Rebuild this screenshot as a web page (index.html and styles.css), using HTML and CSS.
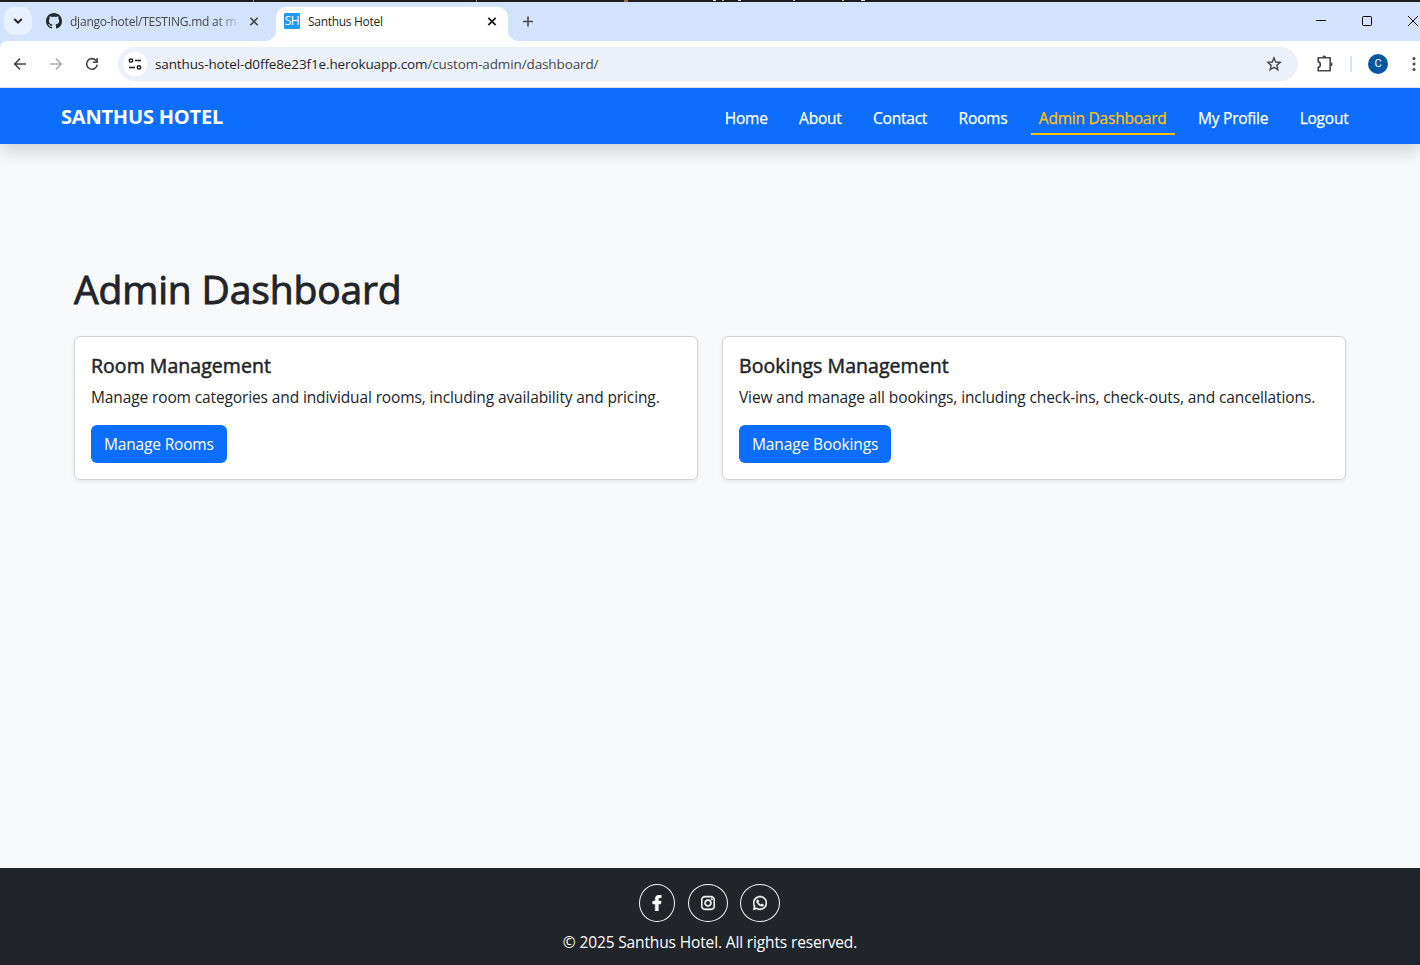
FILE: index.html
```html
<!DOCTYPE html>
<html lang="en">
<head>
<meta charset="utf-8">
<title>Santhus Hotel</title>
<link rel="stylesheet" href="styles.css">
</head>
<body>
<div class="window">
  <div class="window-edge"></div>
  <div class="tabstrip">
    <div class="tab-search"><svg width="28" height="28" viewBox="0 0 28 28"><path d="M10.3 12l3.7 3.7 3.7-3.7" fill="none" stroke="#1f1f1f" stroke-width="1.8"/></svg></div>
    <div class="tab tab-inactive">
      <svg class="tab-icon" width="16" height="16" viewBox="0 0 16 16"><path fill="#24292f" d="M8 0C3.58 0 0 3.58 0 8c0 3.54 2.29 6.53 5.47 7.59.4.07.55-.17.55-.38 0-.19-.01-.82-.01-1.49-2.01.37-2.53-.49-2.69-.94-.09-.23-.48-.94-.82-1.13-.28-.15-.68-.52-.01-.53.63-.01 1.08.58 1.23.82.72 1.21 1.87.87 2.33.66.07-.52.28-.87.51-1.07-1.78-.2-3.64-.89-3.64-3.95 0-.87.31-1.59.82-2.15-.08-.2-.36-1.02.08-2.12 0 0 .67-.21 2.2.82.64-.18 1.32-.27 2-.27s1.36.09 2 .27c1.53-1.04 2.2-.82 2.2-.82.44 1.1.16 1.92.08 2.12.51.56.82 1.27.82 2.15 0 3.07-1.87 3.75-3.65 3.95.29.25.54.73.54 1.48 0 1.07-.01 1.93-.01 2.2 0 .21.15.46.55.38A8.01 8.01 0 0 0 16 8c0-4.42-3.58-8-8-8z"/></svg>
      <span class="tab-title tab-title-fade">django-hotel/TESTING.md at m</span>
      <svg class="tab-close" width="16" height="16" viewBox="0 0 16 16"><path d="M4.3 3.8l7.4 7.4M11.7 3.8l-7.4 7.4" stroke="#474747" stroke-width="1.6"/></svg>
    </div>
    <div class="tab tab-active">
      <span class="favicon">SH</span>
      <span class="tab-title">Santhus Hotel</span>
      <svg class="tab-close" width="16" height="16" viewBox="0 0 16 16"><path d="M4.3 3.8l7.4 7.4M11.7 3.8l-7.4 7.4" stroke="#1f1f1f" stroke-width="1.8"/></svg>
    </div>
    <svg class="new-tab" width="16" height="16" viewBox="0 0 16 16"><path d="M8 2.5v10M3 7.5h10" stroke="#474747" stroke-width="1.6"/></svg>
    <div class="window-controls">
      <svg width="12" height="12" viewBox="0 0 12 12"><path d="M1 5.5h10" stroke="#000"/></svg>
      <svg width="12" height="12" viewBox="0 0 12 12"><rect x="1.5" y="1.5" width="9" height="9" rx="1" fill="none" stroke="#000"/></svg>
      <svg width="12" height="12" viewBox="0 0 12 12"><path d="M1 1l10 10M11 1L1 11" stroke="#000"/></svg>
    </div>
  </div>
  <div class="toolbar-frame">
  <div class="toolbar">
    <svg class="nav-icon" width="16" height="16" viewBox="0 0 16 16"><path d="M14 8H3M8 2.6L2.6 8 8 13.4" fill="none" stroke="#474747" stroke-width="1.5"/></svg>
    <svg class="nav-icon" width="16" height="16" viewBox="0 0 16 16"><path d="M2 8h11M8 2.6L13.4 8 8 13.4" fill="none" stroke="#ababab" stroke-width="1.5"/></svg>
    <svg class="nav-icon" width="16" height="16" viewBox="0 0 16 16"><path d="M13.2 8.6a5.3 5.3 0 1 1-1.3-4.2l1.2 1.2" fill="none" stroke="#474747" stroke-width="1.6"/><path d="M13.9 2v5H8.9V5.5h3.4V2z" fill="#474747"/></svg>
    <div class="omnibox">
      <div class="site-info"><svg width="16" height="16" viewBox="0 0 16 16"><g fill="none" stroke="#1f1f1f" stroke-width="1.5"><circle cx="4" cy="4.6" r="1.7"/><path d="M8 4.6h6M2 11.4h6"/><circle cx="12" cy="11.4" r="1.7"/></g></svg></div>
      <span class="url"><span class="url-host">santhus-hotel-d0ffe8e23f1e.herokuapp.com</span><span class="url-path">/custom-admin/dashboard/</span></span>
      <svg class="star" width="16" height="16" viewBox="0 0 16 16"><path d="M8 1.9l1.75 4.1 4.45.4-3.4 2.95 1.05 4.35L8 11.4l-3.85 2.3L5.2 9.35 1.8 6.4l4.45-.4z" fill="none" stroke="#474747" stroke-width="1.4"/></svg>
    </div>
    <svg class="extensions" width="18" height="18" viewBox="0 0 18 18"><path d="M2.2 2.8h12v12.9h-12v-3.4c2.8-.3 2.8-5 0-5.4z" fill="none" stroke="#474747" stroke-width="1.6" stroke-linejoin="round"/><path d="M6.3 2.6a2 2 0 0 1 4 0zM14.6 7.2a2 2 0 0 1 0 4z" fill="#474747"/></svg>
    <span class="toolbar-divider"></span>
    <span class="profile">C</span>
    <svg class="menu-dots" width="6" height="16" viewBox="0 0 6 16"><g fill="#474747"><circle cx="3" cy="2.5" r="1.5"/><circle cx="3" cy="8" r="1.5"/><circle cx="3" cy="13.5" r="1.5"/></g></svg>
  </div>
  </div>

  <header class="navbar">
    <a class="brand">SANTHUS HOTEL</a>
    <nav class="links">
      <a class="link">Home</a>
      <a class="link">About</a>
      <a class="link">Contact</a>
      <a class="link">Rooms</a>
      <a class="link active">Admin Dashboard</a>
      <a class="link">My Profile</a>
      <a class="link">Logout</a>
    </nav>
  </header>

  <main class="content">
    <h1 class="title">Admin Dashboard</h1>
    <div class="cards">
      <section class="card">
        <h2 class="card-title">Room Management</h2>
        <p class="card-text">Manage room categories and individual rooms, including availability and pricing.</p>
        <a class="btn btn-rooms">Manage Rooms</a>
      </section>
      <section class="card">
        <h2 class="card-title">Bookings Management</h2>
        <p class="card-text">View and manage all bookings, including check-ins, check-outs, and cancellations.</p>
        <a class="btn">Manage Bookings</a>
      </section>
    </div>
  </main>

  <footer class="footer">
    <div class="social">
      <a class="social-link social-facebook"><svg width="10" height="16" viewBox="0 0 320 512"><path d="M279.14 288l14.22-92.66h-88.91v-60.13c0-25.35 12.42-50.06 52.24-50.06h40.42V6.26S260.43 0 225.36 0c-73.22 0-121.08 44.38-121.08 124.72v70.62H22.89V288h81.39v224h100.17V288z"/></svg></a>
      <a class="social-link"><svg width="14" height="16" viewBox="0 0 448 512"><path d="M224.1 141c-63.6 0-114.9 51.3-114.9 114.9s51.3 114.9 114.9 114.9S339 319.5 339 255.9 287.7 141 224.1 141zm0 189.6c-41.1 0-74.7-33.5-74.7-74.7s33.5-74.7 74.7-74.7 74.7 33.5 74.7 74.7-33.6 74.7-74.7 74.7zm146.4-194.3c0 14.9-12 26.8-26.8 26.8-14.9 0-26.8-12-26.8-26.8s12-26.8 26.8-26.8 26.8 12 26.8 26.8zm76.1 27.2c-1.7-35.9-9.9-67.7-36.2-93.9-26.2-26.2-58-34.4-93.9-36.2-37-2.1-147.9-2.1-184.9 0-35.8 1.7-67.6 9.9-93.9 36.1s-34.4 58-36.2 93.9c-2.1 37-2.1 147.9 0 184.9 1.7 35.9 9.9 67.7 36.2 93.9s58 34.4 93.9 36.2c37 2.1 147.9 2.1 184.9 0 35.9-1.7 67.7-9.9 93.9-36.2 26.2-26.2 34.4-58 36.2-93.9 2.1-37 2.1-147.8 0-184.8zM398.8 388c-7.8 19.6-22.9 34.7-42.6 42.6-29.5 11.7-99.5 9-132.1 9s-102.7 2.6-132.1-9c-19.6-7.8-34.7-22.9-42.6-42.6-11.7-29.5-9-99.5-9-132.1s-2.6-102.7 9-132.1c7.8-19.6 22.9-34.7 42.6-42.6 29.5-11.7 99.5-9 132.1-9s102.7-2.6 132.1 9c19.6 7.8 34.7 22.9 42.6 42.6 11.7 29.5 9 99.5 9 132.1s2.7 102.7-9 132.1z"/></svg></a>
      <a class="social-link"><svg width="14" height="16" viewBox="0 0 448 512"><path d="M380.9 97.1C339 55.1 283.2 32 223.9 32c-122.4 0-222 99.6-222 222 0 39.1 10.2 77.3 29.6 111L0 480l117.7-30.9c32.4 17.7 68.9 27 106.1 27h.1c122.3 0 224.1-99.6 224.1-222 0-59.3-25.2-115-67.1-157zm-157 341.6c-33.2 0-65.7-8.9-94-25.7l-6.7-4-69.8 18.3L72 359.2l-4.4-7c-18.5-29.4-28.2-63.3-28.2-98.2 0-101.7 82.8-184.5 184.6-184.5 49.3 0 95.6 19.2 130.4 54.1 34.8 34.9 56.2 81.2 56.1 130.5 0 101.8-84.9 184.6-186.6 184.6zm101.2-138.2c-5.5-2.8-32.8-16.2-37.9-18-5.1-1.9-8.8-2.8-12.5 2.8-3.7 5.6-14.3 18-17.6 21.8-3.2 3.7-6.5 4.2-12 1.4-32.6-16.3-54-29.1-75.5-66-5.7-9.8 5.7-9.1 16.3-30.3 1.8-3.7.9-6.9-.5-9.7-1.4-2.8-12.5-30.1-17.1-41.2-4.5-10.8-9.1-9.3-12.5-9.5-3.2-.2-6.9-.2-10.6-.2-3.7 0-9.7 1.4-14.8 6.9-5.1 5.6-19.4 19-19.4 46.3 0 27.3 19.9 53.7 22.6 57.4 2.8 3.7 39.1 59.7 94.8 83.8 35.2 15.2 49 16.5 66.6 13.9 10.7-1.6 32.8-13.4 37.4-26.4 4.6-13 4.6-24.1 3.2-26.4-1.3-2.5-5-3.9-10.5-6.6z"/></svg></a>
    </div>
    <p class="copyright">© 2025 Santhus Hotel. All rights reserved.</p>
  </footer>
</div>
</body>
</html>
```
FILE: styles.css
```css
* { box-sizing: border-box; }
body { margin: 0; font-family: "Open Sans", "Noto Sans", sans-serif; color: #212529; background: #1d1b1c; }
svg { display: block; flex: none; }
.window { width: 1420px; height: 965px; display: flex; flex-direction: column; overflow: hidden; background: #f8f9fb; }
/* sliver of the window behind, with the feet of its text line */
.window-edge {
  height: 2px; flex: none; background-color: #1d1b1c; background-repeat: no-repeat;
  background-image: linear-gradient(#8a7448, #8a7448), linear-gradient(#ddd, #ddd), linear-gradient(#aaa, #aaa), linear-gradient(#ddd, #ddd), linear-gradient(#bbb, #bbb), linear-gradient(#bbb, #bbb), linear-gradient(#ddd, #ddd), linear-gradient(#888, #888), linear-gradient(#888, #888);
  background-size: 4px 2px, 3px 1px, 2px 1px, 3px 1px, 2px 1px, 2px 1px, 4px 1px, 1px 2px, 1px 2px;
  background-position: 624px 0, 713px 0, 722px 0, 738px 0, 793px 0, 842px 0, 861px 0, 253px 0, 476px 0;
}

.tabstrip { height: 39px; flex: none; display: flex; align-items: center; background: #d3e3fd; padding-left: 4px; }
.tab-search { width: 28px; height: 28px; margin-bottom: 1px; border-radius: 10px; background: #e9f1fe; }
.tab { display: flex; align-items: center; height: 33px; }
.tab-inactive { width: 244px; padding-left: 14px; }
.tab-icon { margin-bottom: 1px; }
.tab-active { width: 232px; height: 34px; align-self: flex-end; padding: 0 8px 5px; background: #fff; border-radius: 10px 10px 0 0; position: relative; }
.tab-active::before, .tab-active::after { content: ""; position: absolute; bottom: 0; width: 10px; height: 10px; }
.tab-active::before { left: -10px; background: radial-gradient(circle at 0 0, transparent 9.5px, #fff 10px); }
.tab-active::after { right: -10px; background: radial-gradient(circle at 100% 0, transparent 9.5px, #fff 10px); }
.tab-title { flex: none; width: 168px; margin-left: 8px; font-size: 12px; letter-spacing: -0.3px; line-height: 18px; color: #1f1f1f; white-space: nowrap; }
.tab-title-fade { color: #474747; letter-spacing: -0.22px; mask-image: linear-gradient(90deg, #000 145px, transparent 172px); }
.tab-close { margin-left: 8px; }
.favicon { width: 16px; height: 16px; margin-bottom: 1px; border-radius: 1px; background: #1e9bf0; color: #fff; font-size: 12px; line-height: 16px; text-align: center; letter-spacing: -0.4px; }
.new-tab { margin-left: 12px; }
.window-controls { display: flex; gap: 34px; margin: 0 1px 1px auto; }

.toolbar-frame { flex: none; background: #d3e3fd; }
.toolbar { height: 47px; display: flex; align-items: center; background: #fff; border-bottom: 1px solid #e3e6ea; border-top-left-radius: 7px; padding-left: 12px; }
.nav-icon { margin-right: 20px; }
.omnibox { width: 1180px; height: 34px; margin-left: -2px; border-radius: 17px; background: #ecf0f9; display: flex; align-items: center; padding: 0 16px 0 5px; }
.site-info { width: 24px; height: 24px; border-radius: 50%; background: #fff; display: flex; align-items: center; justify-content: center; }
.url { margin-left: 8px; padding-bottom: 1px; font-size: 13.5px; white-space: nowrap; letter-spacing: -0.12px; }
.url-host { color: #1f1f1f; }
.url-path { color: #474747; }
.star { margin-left: auto; }
.extensions { margin-left: 18px; }
.toolbar-divider { width: 2px; height: 16px; margin-left: 16px; background: #d3e3fd; }
.profile { width: 20px; height: 20px; margin-left: 16px; border-radius: 50%; background: #0257a0; color: #fff; font-family: Roboto, sans-serif; font-size: 11px; line-height: 20px; text-align: center; }
.menu-dots { margin-left: 23px; }

.navbar { height: 56px; flex: none; display: flex; align-items: center; justify-content: space-between; padding: 0 63.5px 0 61px; background: #0d6efd; box-shadow: 0 8px 16px rgba(0, 0, 0, 0.15); }
.brand { color: #fff; font-size: 20px; font-weight: 700; letter-spacing: -0.2px; }
.links { display: flex; gap: 15.4px; padding-top: 4px; }
.link { height: 34px; padding: 0 8px; color: #fff; font-size: 15.5px; line-height: 34px; letter-spacing: -0.22px; white-space: nowrap; border-bottom: 2px solid transparent; -webkit-text-stroke: 0.25px; }
.link.active { color: #ffc107; border-bottom-color: #ffc107; }

.content { flex: 1; padding: 121px 74px 0; }
.title { margin: 0; font-size: 39px; line-height: 48px; font-weight: 500; letter-spacing: -0.15px; -webkit-text-stroke: 0.9px; }
.cards { display: grid; grid-template-columns: 1fr 1fr; gap: 24px; margin-top: 23px; }
.card { height: 144px; padding: 17px 16px; background: #fff; border: 1px solid #d1d3d5; border-radius: 6px; box-shadow: 0 2px 4px rgba(0, 0, 0, 0.075); }
.card-title { margin: 0 0 7px; font-size: 19.5px; line-height: 24px; font-weight: 500; letter-spacing: 0.05px; -webkit-text-stroke: 0.5px; }
.card-text { margin: 0 0 16px; font-size: 15.5px; line-height: 24px; letter-spacing: -0.12px; white-space: nowrap; }
.btn { display: inline-block; height: 38px; padding: 0 13px; border-radius: 6px; background: #0d6efd; color: #fff; font-size: 15.5px; line-height: 38px; letter-spacing: -0.1px; white-space: nowrap; }
.btn-rooms { letter-spacing: -0.17px; }

.footer { height: 97px; flex: none; padding-top: 16px; background: #212529; color: #fff; text-align: center; }
.social { display: flex; justify-content: center; gap: 12px; height: 38px; padding-right: 1px; }
.social-link { width: 40px; border: 1px solid #f8f9fa; border-radius: 50%; display: flex; align-items: center; justify-content: center; }
.social-link path { fill: #f8f9fa; stroke: #f8f9fa; stroke-width: 16; }
.social-facebook { width: 36px; margin-right: 1px; }
.copyright { margin: 8px 0 0; font-size: 15.5px; line-height: 24px; letter-spacing: -0.14px; }
```
